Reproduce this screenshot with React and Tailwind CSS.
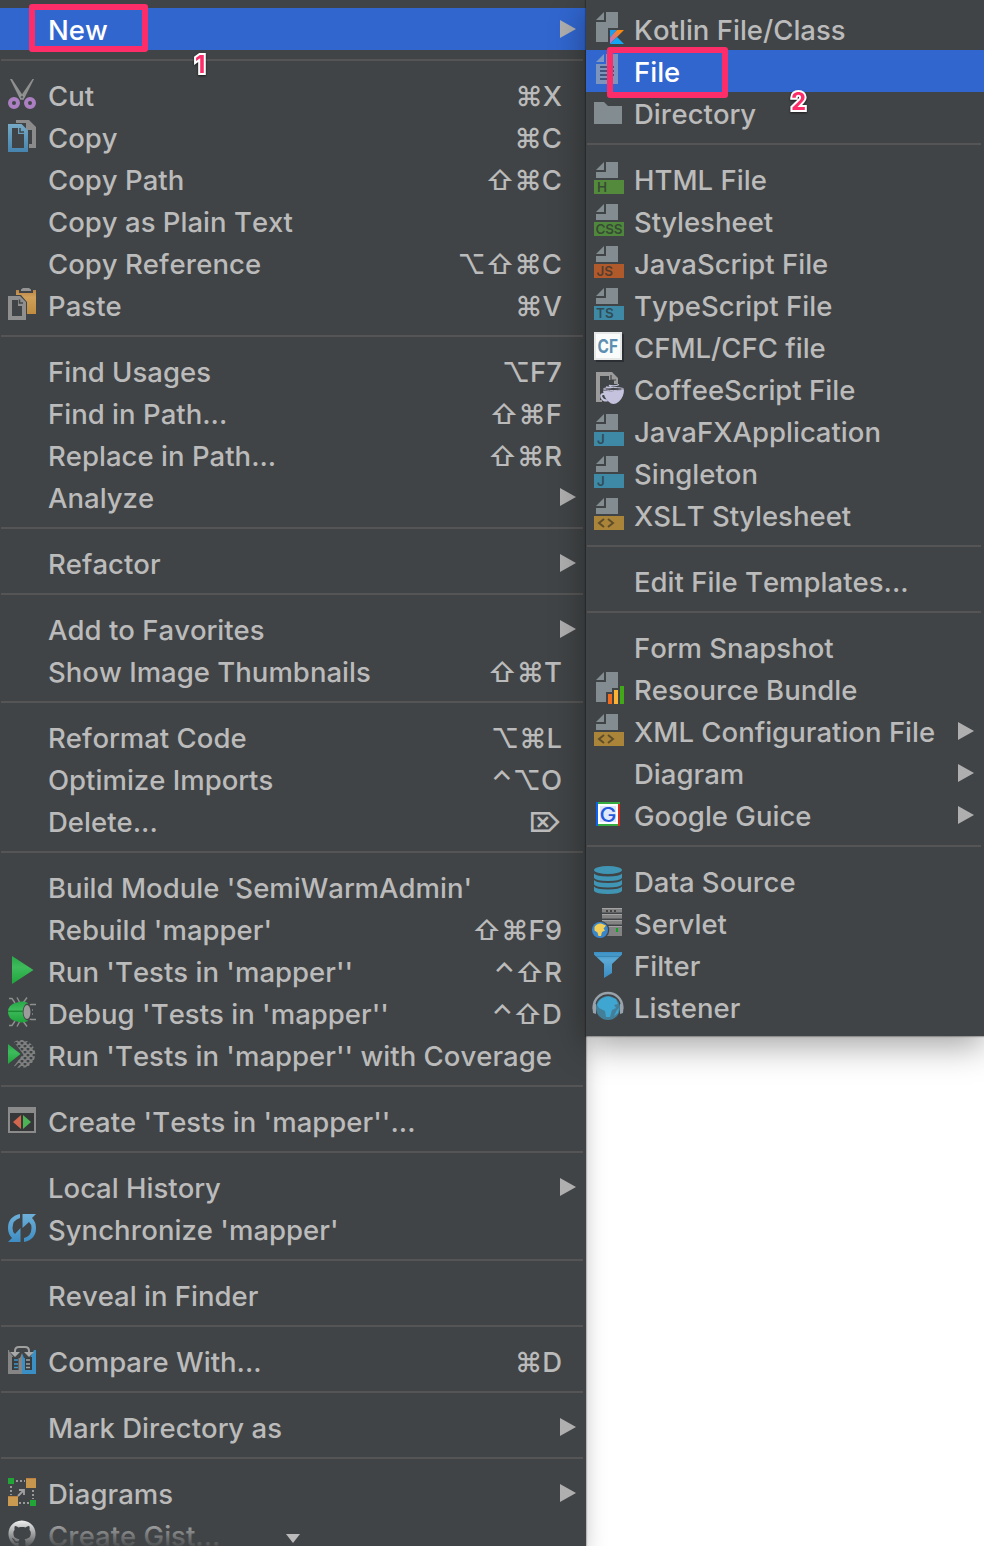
import React from "react";
import { FaGithub } from "react-icons/fa";

const Svg = ({ children }) => (
  <svg width="32" height="32" viewBox="0 0 32 32" className="block">
    {children}
  </svg>
);

/* ---------- file type icons ---------- */
const FOLD = "M12 0V8H4Z";

const Tagged = ({ color, label, x = 5, w }) => (
  <Svg>
    <path d={FOLD} fill="#828c91" />
    <path d="M14 0H26V16H4V10H14Z" fill="#828c91" />
    <rect x="2" y="18" width="30" height="14" fill={color} />
    <text
      x={x}
      y="30"
      fontSize="13.5"
      textLength={w}
      letterSpacing="0"
      fontFamily="Inter, sans-serif"
      fontWeight="600"
      fill="#2b2f31"
      fillOpacity="0.7"
    >
      {label}
    </text>
  </Svg>
);

const XmlIcon = () => (
  <Svg>
    <path d={FOLD} fill="#828c91" />
    <path d="M14 0H26V16H4V10H14Z" fill="#828c91" />
    <rect x="2" y="18" width="30" height="14" fill="#aa8439" />
    <path d="M12 21L7 25L12 29M16 21L21 25L16 29" stroke="#5f4d2b" strokeWidth="2" fill="none" />
  </Svg>
);

const KotlinIcon = () => (
  <Svg>
    <defs>
      <linearGradient id="ktA" x1="0" y1="1" x2="1" y2="0">
        <stop offset="0.1" stopColor="#b074d8" />
        <stop offset="0.5" stopColor="#e8795f" />
        <stop offset="0.8" stopColor="#f98a12" />
      </linearGradient>
    </defs>
    <path d={FOLD} fill="#828c91" />
    <path d="M14 0H26V16H16V30H4V10H14Z" fill="#828c91" />
    <path d="M18 18H25L18 26Z" fill="#1b9df0" />
    <path d="M25 18H32L18 32V25.500Z" fill="url(#ktA)" />
    <path d="M18 32L25 25L32 32Z" fill="#12a7f5" />
  </Svg>
);

const FileIcon = () => (
  <Svg>
    <path d={FOLD} fill="#7d97c4" />
    <path d="M14 0H26V30H4V10H14Z" fill="#7d94bd" />
    <path d="M8 13H22M8 17H22M8 21H22M8 25H16" stroke="#42557c" strokeWidth="2" />
  </Svg>
);

const FolderIcon = () => (
  <Svg>
    <path d="M2 6H12L16 10H30V28H2Z" fill="#828c91" />
  </Svg>
);

const CfIcon = () => (
  <Svg>
    <rect x="4" y="4" width="28" height="28" fill="#2b2e32" />
    <rect x="2" y="2" width="28" height="28" fill="#e6e8e8" />
    <rect x="4" y="4" width="24" height="24" fill="#fafbfb" />
    <text x="5.500" y="23" fontSize="19" textLength="20.5" lengthAdjust="spacingAndGlyphs" fontFamily="Inter, sans-serif" fontWeight="700" fill="#5c8fb0">
      CF
    </text>
  </Svg>
);

const CoffeeIcon = () => (
  <Svg>
    <path d="M4 0H20L26 6V12H22V8H17V4H8V28H10V30H4Z" fill="#9b9b9b" />
    <path d="M19 3V8H24" fill="none" stroke="#414446" strokeWidth="1.200" />
    <path d="M14 15Q22 17 17 13.500Q24 14.500 27 12.500" fill="none" stroke="#c4c2dc" strokeWidth="1.300" />
    <path d="M11 18.500Q21 20.500 32 17.500Q32 25 27 29.500Q24 32 21.500 32Q19 32 16.500 29.500Q12 26 11 18.500Z" fill="#c4c2dc" />
    <path d="M12.500 22Q8 21.500 9.500 25.500Q11 29 15.500 28.500" fill="none" stroke="#c4c2dc" strokeWidth="2" />
    <ellipse cx="21.500" cy="17" rx="10" ry="1.500" fill="none" stroke="#c4c2dc" strokeWidth="1" />
  </Svg>
);

const BundleIcon = () => (
  <Svg>
    <path d={FOLD} fill="#828c91" />
    <path d="M14 0H26V16H20V20H14V30H4V10H14Z" fill="#828c91" />
    <rect x="16" y="22" width="4" height="10" fill="#f26a1b" />
    <rect x="22" y="18" width="4" height="14" fill="#f9b233" />
    <rect x="28" y="14" width="4" height="18" fill="#42a818" />
  </Svg>
);

const GuiceIcon = () => (
  <Svg>
    <rect x="4" y="4" width="24" height="24" fill="#fff" />
    <rect x="8" y="8" width="16" height="16" fill="#dfe7fb" />
    <path d="M4 5H28M4 27H28" stroke="#35ab42" strokeWidth="2" />
    <path d="M5 4V28" stroke="#0b62f4" strokeWidth="2" />
    <path d="M27 6V28" stroke="#dd2a1b" strokeWidth="2" />
    <text x="7.500" y="23.500" fontSize="20" textLength="17" lengthAdjust="spacingAndGlyphs" fontFamily="Inter, sans-serif" fontWeight="500" fill="#2559dc">
      G
    </text>
  </Svg>
);

const DatabaseIcon = () => (
  <Svg>
    <ellipse cx="16" cy="6" rx="14" ry="4" fill="#4095b5" />
    <path
      d="M2 9.500Q4 12.500 16 12.500T30 9.500V14Q28 17 16 17T2 14ZM2 16Q4 19 16 19T30 16V20.500Q28 23.500 16 23.500T2 20.500ZM2 22.500Q4 25.500 16 25.500T30 22.500V27Q28 30 16 30T2 27Z"
      fill="#4095b5"
    />
  </Svg>
);

const ServletIcon = () => (
  <Svg>
    <path d="M10 2H30V6.500H10ZM10 8H30V12.500H10ZM10 14H30V18.500H10ZM10 20H30V30H10Z" fill="#838383" />
    <path d="M10 2.500H30M10 8.500H30M10 14.500H30M10 20.500H30" stroke="#a3a3a3" />
    <path d="M14 5H16M18 5H20M22 5H24" stroke="#444" strokeWidth="2" />
    <rect x="24" y="22" width="2" height="4" fill="#12a52a" />
    <circle cx="8" cy="24" r="9.300" fill="#414446" />
    <circle cx="8" cy="24" r="8" fill="#3b85cb" />
    <path d="M2.500 21Q5 17 9 17.500L14 19.500L11.500 22.500L13 24.500L10 26L9 30H6.500L5.500 26.500L2.500 24.500Z" fill="#f3cf58" />
  </Svg>
);

const FilterIcon = () => (
  <Svg>
    <defs>
      <linearGradient id="fl" x1="0" y1="0" x2="0" y2="1">
        <stop offset="0" stopColor="#3b8fc2" />
        <stop offset="0.3" stopColor="#5aa9d6" />
        <stop offset="1" stopColor="#3a8bc0" />
      </linearGradient>
    </defs>
    <path d="M2 4H30V6.500L20 16V25L12 30V16L2 6.500Z" fill="url(#fl)" />
    <path d="M4 8.300H28" stroke="#3580ae" strokeWidth="1" />
  </Svg>
);

const ListenerIcon = () => (
  <Svg>
    <path d="M2 19V16A14 13 0 0 1 30 16V19" fill="none" stroke="#98a2aa" strokeWidth="2.500" />
    <path d="M1 13Q0 18 1 23L4 24V14ZM31 13Q32 18 31 23L28 24V14Z" fill="#98a2aa" />
    <circle cx="16" cy="18" r="12" fill="#437f99" />
    <path d="M7 11Q11 6.500 17 6.500L24 9L26 14L22 15L24 18L20 20L18 27H14L13 21L7 18L5 15Z" fill="#3fa6d2" />
    <path d="M25 20L27 18L26 23L22 26Z" fill="#3fa6d2" />
  </Svg>
);

/* ---------- action icons ---------- */
const CutIcon = () => (
  <Svg>
    <path d="M4 1L14.500 22L18.500 20L6 1ZM28 1L17.500 22L13.500 20L26.500 1Z" fill="#8f8f8f" />
    <circle cx="16" cy="19" r="2" fill="#5a5d5f" stroke="#a5a5a5" />
    <circle cx="8" cy="25" r="4" fill="none" stroke="#ab7fc1" strokeWidth="4" />
    <circle cx="24" cy="25" r="4" fill="none" stroke="#ab7fc1" strokeWidth="4" />
  </Svg>
);

const CopyIcon = () => (
  <Svg>
    <defs>
      <linearGradient id="cp" x1="0" y1="0" x2="0" y2="1">
        <stop offset="0" stopColor="#76aac6" />
        <stop offset="1" stopColor="#4684ae" />
      </linearGradient>
    </defs>
    <path d="M10 0H23L30 7V28H23V24H26V10H20V3H10Z" fill="#8b8b8b" />
    <path d="M22 3V8H27" fill="none" stroke="#8b8b8b" strokeWidth="2" />
    <path fillRule="evenodd" d="M2 4H15.500L22 10.500V32H2ZM6 8V28H18V14H12V8Z" fill="url(#cp)" />
    <path d="M14 8V12H18" fill="none" stroke="#414446" strokeWidth="1.500" />
  </Svg>
);

const PasteIcon = () => (
  <Svg>
    <defs>
      <linearGradient id="ps" x1="0" y1="0" x2="0" y2="1">
        <stop offset="0" stopColor="#b98445" />
        <stop offset="0.3" stopColor="#cfa05a" />
        <stop offset="1" stopColor="#c08d3f" />
      </linearGradient>
    </defs>
    <path d="M10 2H30V26H21V14L15 7H10Z" fill="url(#ps)" />
    <path d="M13 1H27V5H13Z" fill="#414446" />
    <path d="M15 3V1.500L17 0H23L25 1.500V3Z" fill="#949494" />
    <path fillRule="evenodd" d="M2 8H14L20 14V32H2ZM6 12V28H16V18H12V12Z" fill="#8f8f8f" />
    <path d="M13.500 11.500V15H17" fill="none" stroke="#414446" strokeWidth="1.500" />
  </Svg>
);

const Green = ({ id }) => (
  <defs>
    <linearGradient id={id} x1="0" y1="0" x2="0" y2="1">
      <stop offset="0" stopColor="#27a848" />
      <stop offset="0.4" stopColor="#3fbb5c" />
      <stop offset="1" stopColor="#1fa43c" />
    </linearGradient>
  </defs>
);

const RunIcon = () => (
  <Svg>
    <Green id="g1" />
    <path d="M6 2L27.500 16L6 30Z" fill="url(#g1)" />
  </Svg>
);

const DebugIcon = () => (
  <Svg>
    <Green id="g2" />
    <path
      d="M3 2.500H6L9 7M11 1.500L14 7M21 1.500L17 7M3 29.500H6L9 25M11 30.500L14 25M21 30.500L17 25M22 10L25 8.500H30M22 22L25 23.500H30M24 14H27M24 18H27"
      fill="none"
      stroke="#8f8f8f"
      strokeWidth="1.400"
    />
    <path d="M22 7Q17 4.500 11 6.500Q2 8.500 2 16Q2 23.500 11 25.500Q17 27.500 22 25Z" fill="url(#g2)" />
    <path d="M2 15.300H17" stroke="#1d8c37" strokeWidth="1.500" />
    <ellipse cx="21.500" cy="16" rx="4.800" ry="8.500" fill="#414446" />
    <ellipse cx="21" cy="16" rx="3.500" ry="7" fill="#9c9c9c" />
  </Svg>
);

const CoverageIcon = () => (
  <Svg>
    <Green id="g3" />
    <clipPath id="cv">
      <path d="M8 4A14 14 0 1 1 8 28L17 16Z" />
    </clipPath>
    <g clipPath="url(#cv)">
      <path
        d="M-4 0L28 32M2 0L34 32M8 0L40 32M14 0L46 32M20 0L52 32M-10 0L22 32M12 0L-20 32M18 0L-14 32M24 0L-8 32M30 0L-2 32M36 0L4 32M42 0L10 32M48 0L16 32M54 0L22 32"
        stroke="#7f8080"
        strokeWidth="1.600"
      />
    </g>
    <path d="M2 6L14.500 16L2 26Z" fill="url(#g3)" />
  </Svg>
);

const CreateIcon = () => (
  <Svg>
    <rect x="2" y="3" width="28" height="26" fill="#8b8b8b" />
    <rect x="4" y="9" width="24" height="18" fill="#353739" />
    <path d="M15 11V25L7 18Z" fill="#d2664f" />
    <path d="M17 11V25L25 18Z" fill="#4db355" />
  </Svg>
);

const SyncIcon = () => (
  <Svg>
    <defs>
      <linearGradient id="sy" x1="0" y1="0" x2="0" y2="1">
        <stop offset="0" stopColor="#6fb0da" />
        <stop offset="1" stopColor="#3d8dc4" />
      </linearGradient>
    </defs>
    <path
      d="M14 2V6Q6.500 8 6.500 16Q6.500 20 9 22L14.500 16V30H2L6 26Q2 22 2 16Q2 4.500 14 2ZM18 30V26Q25.500 24 25.500 16Q25.500 12 23 10L16.500 16V2H30L26 6Q30 10 30 16Q30 27.500 18 30Z"
      fill="url(#sy)"
    />
  </Svg>
);

const CompareIcon = () => (
  <Svg>
    <path d="M2 6H16V30H2Z" fill="#858585" />
    <path d="M16 6H30V30H16Z" fill="#3a8fc4" />
    <path d="M6 13H12.500V26H6ZM19 13H26V26H19Z" fill="#393c3e" />
    <path d="M4 4H28V6L24 14H18L16 9L14 14H8L3 7Z" fill="#414446" />
    <path d="M8 16H12M8 20H12M8 23.500H12" stroke="#3f94c8" strokeWidth="1.500" />
    <path d="M20 16H24M20 20H24M20 23.500H24" stroke="#a0a0a0" strokeWidth="1.500" />
    <path d="M9 9V7Q9 3 13 3H19Q23 3 23 7V9" fill="none" stroke="#a0a0a0" strokeWidth="2" />
    <path d="M4 8H14L9 13ZM18 8H28L23 13Z" fill="#a8a8a8" />
  </Svg>
);

const DiagramsIcon = () => (
  <Svg>
    <path d="M10 5H19M27 14V23M13 27H23M5 10V19" stroke="#999" strokeWidth="2" strokeDasharray="2 2" />
    <rect x="2" y="2" width="6" height="6" fill="#22a537" />
    <rect x="24" y="24" width="6" height="6" fill="#22a537" />
    <rect x="20" y="2" width="10" height="10" fill="#c6964f" />
    <rect x="2" y="20" width="10" height="10" fill="#c99a50" />
    <path d="M20 2.500H30M2 20.500H12" stroke="#b98242" />
    <path d="M12 20L18 14M13 14H18V19" fill="none" stroke="#a0a0a0" strokeWidth="1.800" />
  </Svg>
);

const GistIcon = () => (
  <div className="p-0.5">
    <FaGithub size={28} className="text-white" />
  </div>
);

const SEP = "sep";

const mainItems = [
  { label: "New", sub: true, active: true },
  SEP,
  { label: "Cut", icon: CutIcon, keys: "⌘X" },
  { label: "Copy", icon: CopyIcon, keys: "⌘C" },
  { label: "Copy Path", keys: "⇧⌘C" },
  { label: "Copy as Plain Text" },
  { label: "Copy Reference", keys: "⌥⇧⌘C" },
  { label: "Paste", icon: PasteIcon, keys: "⌘V" },
  SEP,
  { label: "Find Usages", keys: "⌥F7" },
  { label: "Find in Path...", keys: "⇧⌘F" },
  { label: "Replace in Path...", keys: "⇧⌘R" },
  { label: "Analyze", sub: true },
  SEP,
  { label: "Refactor", sub: true },
  SEP,
  { label: "Add to Favorites", sub: true },
  { label: "Show Image Thumbnails", keys: "⇧⌘T" },
  SEP,
  { label: "Reformat Code", keys: "⌥⌘L" },
  { label: "Optimize Imports", keys: "⌃⌥O" },
  { label: "Delete...", keys: "⌦" },
  SEP,
  { label: "Build Module 'SemiWarmAdmin'" },
  { label: "Rebuild 'mapper'", keys: "⇧⌘F9" },
  { label: "Run 'Tests in 'mapper''", icon: RunIcon, keys: "⌃⇧R" },
  { label: "Debug 'Tests in 'mapper''", icon: DebugIcon, keys: "⌃⇧D" },
  { label: "Run 'Tests in 'mapper'' with Coverage", icon: CoverageIcon },
  SEP,
  { label: "Create 'Tests in 'mapper''...", icon: CreateIcon },
  SEP,
  { label: "Local History", sub: true },
  { label: "Synchronize 'mapper'", icon: SyncIcon },
  SEP,
  { label: "Reveal in Finder" },
  SEP,
  { label: "Compare With...", icon: CompareIcon, keys: "⌘D" },
  SEP,
  { label: "Mark Directory as", sub: true },
  SEP,
  { label: "Diagrams", icon: DiagramsIcon, sub: true },
  { label: "Create Gist...", icon: GistIcon },
];

const subItems = [
  { label: "Kotlin File/Class", icon: KotlinIcon },
  { label: "File", icon: FileIcon, active: true },
  { label: "Directory", icon: FolderIcon },
  SEP,
  { label: "HTML File", icon: () => <Tagged color="#538a3c" label="H" /> },
  { label: "Stylesheet", icon: () => <Tagged color="#4f883c" label="CSS" x={3.5} w={27} /> },
  { label: "JavaScript File", icon: () => <Tagged color="#b05a2b" label="JS" x={4.5} /> },
  { label: "TypeScript File", icon: () => <Tagged color="#3d89a6" label="TS" x={4} /> },
  { label: "CFML/CFC file", icon: CfIcon },
  { label: "CoffeeScript File", icon: CoffeeIcon },
  { label: "JavaFXApplication", icon: () => <Tagged color="#3d89a6" label="J" /> },
  { label: "Singleton", icon: () => <Tagged color="#3d89a6" label="J" /> },
  { label: "XSLT Stylesheet", icon: XmlIcon },
  SEP,
  { label: "Edit File Templates..." },
  SEP,
  { label: "Form Snapshot" },
  { label: "Resource Bundle", icon: BundleIcon },
  { label: "XML Configuration File", icon: XmlIcon, sub: true },
  { label: "Diagram", sub: true },
  { label: "Google Guice", icon: GuiceIcon, sub: true },
  SEP,
  { label: "Data Source", icon: DatabaseIcon },
  { label: "Servlet", icon: ServletIcon },
  { label: "Filter", icon: FilterIcon },
  { label: "Listener", icon: ListenerIcon },
];

function Item({ label, icon: Icon, keys, sub, active }) {
  return (
    <div className={`flex h-[42px] pl-1.5 ${active ? "bg-[#3166cf] text-white" : "text-[#bbbbbb]"}`}>
      <div className="mt-1 size-8 shrink-0">{Icon && <Icon />}</div>
      <span className="ml-2.5 mt-px whitespace-pre leading-[42px]">{label}</span>
      {keys && <span className="ml-auto mr-6 mt-px whitespace-pre leading-[42px]">{keys}</span>}
      {sub && (
        <svg width="16" height="18" viewBox="0 0 16 18" className="ml-auto mr-2.5 mt-3 block">
          <path d="M0 0L16 9L0 18Z" fill="#afafaf" />
        </svg>
      )}
    </div>
  );
}

function Menu({ items }) {
  return items.map((it, i) =>
    it === SEP ? (
      <div key={i} className="h-6 pl-px pr-[3px] pt-[9px]">
        <div className="h-0.5 bg-[#555555]" />
      </div>
    ) : (
      <Item key={i} {...it} />
    )
  );
}

export default function App() {
  return (
    <div className="relative flex h-[1546px] w-[984px] items-start overflow-hidden bg-white font-['Inter','DejaVu_Sans',sans-serif] text-[27.5px] font-[450] tracking-[0.02px] [font-kerning:none]">
      <div className="relative h-[1546px] w-[586px] shrink-0 bg-[#414446] pt-2 shadow-[0_0_1px_1px_rgba(0,0,0,0.2),0_8px_20px_rgba(0,0,0,0.22)]">
        <Menu items={mainItems} />
        <div className="absolute bottom-0 left-0 flex h-7 w-full justify-center bg-linear-to-b from-[#414446]/0 to-[#414446]/90">
          <svg width="14" height="9" viewBox="0 0 14 9" className="mt-4">
            <path d="M0 0H14L7 9Z" fill="#bbbbbb" />
          </svg>
        </div>
      </div>
      <div className="relative w-[398px] bg-[#414446] py-2 shadow-[0_0_1px_1px_rgba(0,0,0,0.25),0_10px_32px_rgba(0,0,0,0.36)]">
        <Menu items={subItems} />
      </div>
      <div className="absolute left-[29px] top-1 h-12 w-[119px] rounded-[3px] border-[6px] border-[#fd2d69]" />
      <div className="absolute left-[607px] top-[47px] h-[51px] w-[121px] rounded-[3px] border-[6px] border-[#fd2d69]" />
      <span className="absolute left-[195px] top-[51px] text-[24px] font-bold leading-7 text-[#fd2d69] [-webkit-text-stroke:4px_white] [paint-order:stroke] drop-shadow-[0_1px_1px_rgba(0,0,0,0.6)]">
        1
      </span>
      <span className="absolute left-[791px] top-[88px] text-[24px] font-bold leading-7 text-[#fd2d69] [-webkit-text-stroke:4px_white] [paint-order:stroke] drop-shadow-[0_1px_1px_rgba(0,0,0,0.6)]">
        2
      </span>
    </div>
  );
}
